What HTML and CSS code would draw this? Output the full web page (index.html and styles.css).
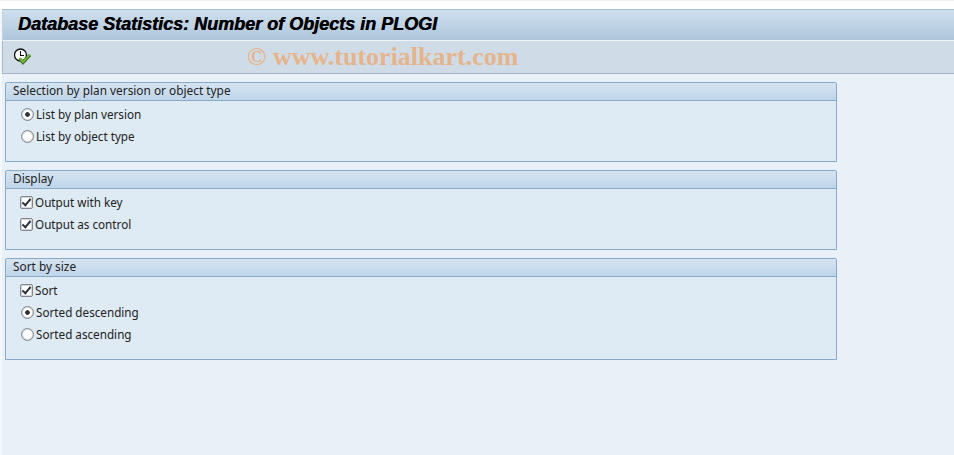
FILE: index.html
```html
<!DOCTYPE html>
<html lang="en">
<head>
    <meta charset="UTF-8">
    <meta name="viewport" content="width=device-width, initial-scale=1.0">
    <title>Database Statistics</title>
    <link rel="stylesheet" href="styles.css">
</head>
<body>
    <div class="top-strip"></div>
    <div class="screen">
        <div class="title-bar">
            <h1>Database Statistics: Number of Objects in PLOGI</h1>
        </div>
        <div class="toolbar">
            <svg class="exec-icon" width="18" height="18" viewBox="0 0 18 18">
                <circle cx="6.5" cy="7" r="6" fill="#fff" stroke="#111" stroke-width="1.3"/>
                <path d="M6.5 3v4.5h3.5" fill="none" stroke="#111" stroke-width="1.1"/>
                <path d="M5.5 10.5l3.5 4 7-7.5" fill="none" stroke="#3f6f22" stroke-width="3.2"/>
                <path d="M5.5 10l3.5 4 7-7.5" fill="none" stroke="#7cc13a" stroke-width="1.8"/>
            </svg>
            <span class="watermark">© www.tutorialkart.com</span>
        </div>
        <div class="content">
            <section class="group">
                <div class="group-head">Selection by plan version or object type</div>
                <div class="group-body">
                    <div class="row"><span class="radio on"></span>List by plan version</div>
                    <div class="row"><span class="radio"></span>List by object type</div>
                </div>
            </section>
            <section class="group">
                <div class="group-head">Display</div>
                <div class="group-body">
                    <div class="row"><span class="check"></span>Output with key</div>
                    <div class="row"><span class="check"></span>Output as control</div>
                </div>
            </section>
            <section class="group">
                <div class="group-head">Sort by size</div>
                <div class="group-body">
                    <div class="row"><span class="check"></span>Sort</div>
                    <div class="row"><span class="radio on"></span>Sorted descending</div>
                    <div class="row"><span class="radio"></span>Sorted ascending</div>
                </div>
            </section>
        </div>
    </div>
</body>
</html>
```

FILE: styles.css
```css
html, body {
    height: 100%;
}
body {
    margin: 0;
    overflow: hidden;
    background-color: #fff;
    font-family: "Noto Sans", sans-serif;
    font-size: 11.7px;
    color: #222;
    display: flex;
    flex-direction: column;
}
.top-strip {
    height: 9px;
    flex: none;
    background-color: #fff;
    border-top: 1px solid #eef0f2;
    box-sizing: border-box;
}
.screen {
    flex: 1;
    display: flex;
    flex-direction: column;
    padding-left: 2px;
    background: linear-gradient(90deg, #f3f7fb 2px, #e9f0f8 2px);
}
.title-bar {
    height: 32px;
    box-sizing: border-box;
    border-top: 1px solid #a9bccf;
    border-bottom: 1px solid #eef3f8;
    border-left: 1px solid #c5d3e0;
    background: linear-gradient(#cfe0ee, #aec5db);
    padding-left: 15px;
}
h1 {
    margin: 0;
    font-family: "Liberation Sans", Arial, sans-serif;
    font-size: 18px;
    font-style: italic;
    font-weight: bold;
    line-height: 29px;
    color: #000;
    text-shadow: 0.4px 0 #000;
}
.toolbar {
    height: 33px;
    box-sizing: border-box;
    display: flex;
    align-items: center;
    background-color: #cfdce8;
    border-bottom: 1px solid #a5b8cb;
    border-left: 1px solid #a5b8cb;
    padding-left: 11px;
}
.exec-icon {
    flex: none;
}
.watermark {
    margin-left: 215px;
    font-family: "Liberation Serif", serif;
    font-size: 26px;
    font-weight: bold;
    color: #e6b48a;
    white-space: nowrap;
}
.content {
    padding: 8px 0 0 3px;
}
.group {
    width: 832px;
    box-sizing: border-box;
    margin-bottom: 8px;
    border: 1px solid #88aac9;
    border-radius: 2px 2px 0 0;
    background-color: #deeaf4;
}
.group-head {
    height: 18px;
    box-sizing: border-box;
    font-size: 11.85px;
    line-height: 15px;
    padding-left: 7px;
    border-bottom: 1px solid #88aac9;
    background: linear-gradient(#d6e4f1, #bfd5ea);
}
.group-body {
    height: 60px;
    box-sizing: border-box;
    padding: 2px 0 0 15px;
}
.group:last-child .group-body {
    height: 82px;
}
.row {
    height: 22px;
    display: flex;
    align-items: center;
    white-space: nowrap;
}
.radio {
    width: 13px;
    height: 13px;
    box-sizing: border-box;
    flex: none;
    margin-right: 2px;
    border: 1px solid #83878d;
    border-radius: 50%;
    background-color: #fff;
    box-shadow: inset 0 0 0 1px #d5d8dc;
}
.radio.on {
    background: radial-gradient(circle, #333 0 2px, #fff 2.6px);
}
.check {
    width: 13px;
    height: 13px;
    box-sizing: border-box;
    flex: none;
    margin: 0 2px 0 -1px;
    position: relative;
    border: 1px solid #83878d;
    border-radius: 2px;
    background-color: #fff;
    box-shadow: inset 0 0 0 1px #d5d8dc;
}
.check::after {
    content: "";
    position: absolute;
    left: 3px;
    top: 0;
    width: 3px;
    height: 7px;
    border: solid #2b3440;
    border-width: 0 2px 2px 0;
    transform: rotate(40deg);
}
```
